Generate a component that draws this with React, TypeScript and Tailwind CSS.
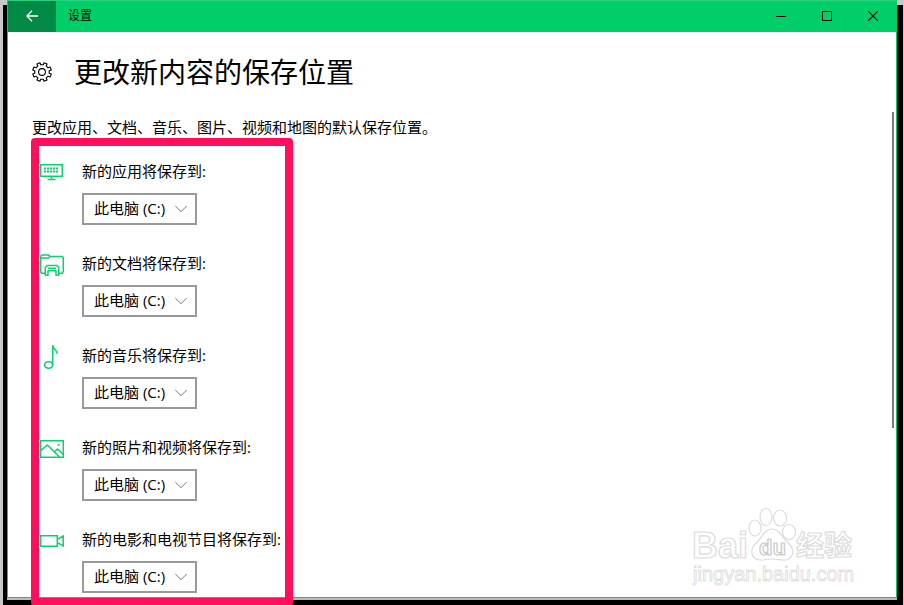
import React from 'react'

type IconProps = { className?: string }

const polar = (radius: number, degrees: number) => {
  const angle = (degrees * Math.PI) / 180
  return `${(10 + radius * Math.cos(angle)).toFixed(2)} ${(10 + radius * Math.sin(angle)).toFixed(2)}`
}

// Eight teeth, with a gap at the top
const gearPoints = Array.from({ length: 8 }, (_, i) => {
  const center = 22.5 + i * 45
  return [polar(7.3, center - 12), polar(9.5, center - 10), polar(9.5, center + 10), polar(7.3, center + 12)].join(' ')
}).join(' ')

const GearIcon: React.FC<IconProps> = ({ className }) => (
  <svg viewBox="0 0 20 20" className={className} fill="none" stroke="currentColor" strokeWidth="1.1" strokeLinejoin="round" aria-hidden="true">
    <polygon points={gearPoints} />
    <circle cx="10" cy="10" r="3.4" />
  </svg>
)

const MonitorIcon: React.FC<IconProps> = ({ className }) => (
  <svg viewBox="0 0 24 24" className={className} fill="none" stroke="currentColor" aria-hidden="true">
    <path d="M.7 3.7h21.6v11.6H.7z" strokeWidth="1.5" />
    <path d="M4 7.5h15M4 10.5h15" strokeWidth="2" strokeDasharray="2 1" />
    <path d="M11.5 15.5V19M7.5 18.5h8" strokeWidth="1.5" />
  </svg>
)

const DocumentsIcon: React.FC<IconProps> = ({ className }) => (
  <svg viewBox="0 0 24 24" className={className} fill="none" stroke="currentColor" strokeWidth="1.5" strokeLinejoin="round" aria-hidden="true">
    <path d="M5 20.3H1.5L.7 19V3l1-1h7l1.4 1.5h12.2l1 1v14l-1 1.8H19" />
    <path d="M1 5h7.5L10 3.5" />
    <path d="M8 22.3H5.3v-7.8l2-2h9.4l2 2v7.800H16v-4.5H8z" />
    <path d="M8 15.3h8" />
  </svg>
)

const MusicIcon: React.FC<IconProps> = ({ className }) => (
  <svg viewBox="0 0 24 24" className={className} fill="none" stroke="currentColor" strokeWidth="1.6" aria-hidden="true">
    <ellipse cx="8.6" cy="20" rx="4" ry="3.2" />
    <path d="M12.7 20V.3c0 4.4 4.5 4 4.5 8.5" />
  </svg>
)

const PictureIcon: React.FC<IconProps> = ({ className }) => (
  <svg viewBox="0 0 24 24" className={className} fill="none" stroke="currentColor" strokeWidth="1.5" aria-hidden="true">
    <path d="M.7 3.7h22.6v16.6H.7z" />
    <path d="M1 13.5 7.3 8l12.2 12M14 15.3l3.5-3.3 5.8 5.5" />
    <circle cx="18.5" cy="8" r="1.1" fill="currentColor" stroke="none" />
  </svg>
)

const VideoIcon: React.FC<IconProps> = ({ className }) => (
  <svg viewBox="0 0 24 24" className={className} fill="none" stroke="currentColor" strokeWidth="1.5" aria-hidden="true">
    <path d="M.7 6.7h16.6v10.6H.7zM17.3 10.3l5.9-3.2v9.8l-5.9-3.2" />
  </svg>
)

const locations = [
  { id: 'apps', label: '新的应用将保存到:', Icon: MonitorIcon },
  { id: 'documents', label: '新的文档将保存到:', Icon: DocumentsIcon },
  { id: 'music', label: '新的音乐将保存到:', Icon: MusicIcon },
  { id: 'pictures', label: '新的照片和视频将保存到:', Icon: PictureIcon },
  { id: 'videos', label: '新的电影和电视节目将保存到:', Icon: VideoIcon },
]

const TitleBar: React.FC = () => (
  <header className="flex h-[31px] items-stretch bg-[#00cf69]">
    <button type="button" aria-label="返回" className="flex w-12 items-center justify-center bg-[#008a46] pb-0.5 text-white">
      <svg viewBox="0 0 12 12" className="size-3" fill="none" stroke="currentColor" strokeWidth="1.3" aria-hidden="true">
        <path d="M12 6H.8M6 .8.8 6 6 11.2" />
      </svg>
    </button>
    <span className="flex flex-1 items-center pb-px pl-3 text-xs">设置</span>
    {/* Window controls */}
    <div className="flex">
      <button type="button" aria-label="最小化" className="flex w-[46px] items-center justify-center pb-0.5">
        <svg viewBox="0 0 10 10" className="size-[10px]" stroke="currentColor" aria-hidden="true">
          <path d="M0 5.5h10" />
        </svg>
      </button>
      <button type="button" aria-label="最大化" className="flex w-[46px] items-center justify-center pb-0.5">
        <svg viewBox="0 0 10 10" className="size-[10px]" fill="none" stroke="currentColor" aria-hidden="true">
          <path d="M.5.5h9v9h-9z" />
        </svg>
      </button>
      <button type="button" aria-label="关闭" className="flex w-[46px] items-center justify-center pb-0.5">
        <svg viewBox="0 0 10 10" className="size-[10px]" stroke="currentColor" strokeWidth="1.1" aria-hidden="true">
          <path d="m0 0 10 10M10 0 0 10" />
        </svg>
      </button>
    </div>
  </header>
)

const Watermark: React.FC = () => (
  <div className="pointer-events-none absolute right-[38px] bottom-2 w-[168px] text-[#dcdcdc]">
    <svg viewBox="0 0 168 82" className="w-full" fill="#fff" stroke="currentColor" strokeWidth="1.2" aria-hidden="true">
      <ellipse cx="65" cy="21" rx="6" ry="8" />
      <ellipse cx="76" cy="10" rx="6" ry="8.5" />
      <ellipse cx="90" cy="11" rx="6.5" ry="8" />
      <ellipse cx="99" cy="25" rx="6.5" ry="7.5" />
      <path d="M82 22c7 0 8.5 6 14 11.5 5 5 7.5 8 6.5 13s-5 7-10 6.5c-4-.4-6-1-10.5-1s-6 .8-10 1c-5 .3-9-2-10-6.500-1-5 1.5-8 6.5-13C73.5 28.300 75 22 82 22z" />
      <g strokeLinejoin="round" fontFamily="'Liberation Sans', 'Noto Sans CJK SC', sans-serif">
        <text x="2" y="51" fontSize="36" fontWeight="700">Bai</text>
        <text x="69" y="48" fontSize="22" fontWeight="700" stroke="#c8c8c8">du</text>
        <text x="106" y="49" fontSize="28" fontWeight="700">经验</text>
        <text x="3" y="74" fontSize="20" strokeWidth="0.8">jingyan.baidu.com</text>
      </g>
    </svg>
  </div>
)

export default function App() {
  return (
    <div className="flex min-h-screen flex-col overflow-hidden bg-[#c8c8c8] pt-[5px] pr-px pl-[3px] font-['Open_Sans','Noto_Sans_CJK_SC',sans-serif] text-black">
      <div className="flex flex-1 flex-col bg-black pr-[6px] pb-[7px] pl-1">
        <div className="relative -mt-[5px] flex flex-1 flex-col border border-[#00cf69] border-t-[#2bd080] bg-white shadow-[0_2px_0_#bbb]">
          <TitleBar />
          <div className="flex h-20 items-center gap-[22px] px-6">
            <GearIcon className="size-5" />
            <h1 className="text-[28px] leading-10">更改新内容的保存位置</h1>
          </div>
          <div className="flex flex-1">
            <main className="flex-1 pt-[5px] pl-[23px]">
              <p className="pb-px pl-px text-[15px] leading-5">更改应用、文档、音乐、图片、视频和地图的默认保存位置。</p>
              {/* Highlighted list of save locations */}
              <section className="-mb-[9px] flex w-fit flex-col gap-7 rounded-[4px] border-8 border-[#ff0f5b] pt-[15px] pr-1 pb-[5px] pl-px">
                {locations.map(({ id, label, Icon }) => (
                  <div key={id} className="flex gap-[18px]">
                    <Icon className="size-6 text-[#0ccf70]" />
                    <div className="flex flex-col items-start gap-3 text-[15px] leading-5">
                      <label htmlFor={id}>{label}</label>
                      <div className="relative">
                        <select id={id} className="h-8 w-[115px] appearance-none border-2 border-[#999] bg-white pb-0.5 pl-[10px] leading-5">
                          <option>此电脑 (C:)</option>
                        </select>
                        <svg viewBox="0 0 12 12" className="pointer-events-none absolute top-[10px] right-[10px] size-3" fill="none" stroke="#777" aria-hidden="true">
                          <path d="m.3 3 5.7 5.7L11.7 3" />
                        </svg>
                      </div>
                    </div>
                  </div>
                ))}
              </section>
            </main>
            {/* Scrollbar thumb */}
            <div className="mr-0.5 h-[316px] w-0.5 bg-[#7a7a7a]" />
          </div>
          <Watermark />
        </div>
      </div>
    </div>
  )
}
